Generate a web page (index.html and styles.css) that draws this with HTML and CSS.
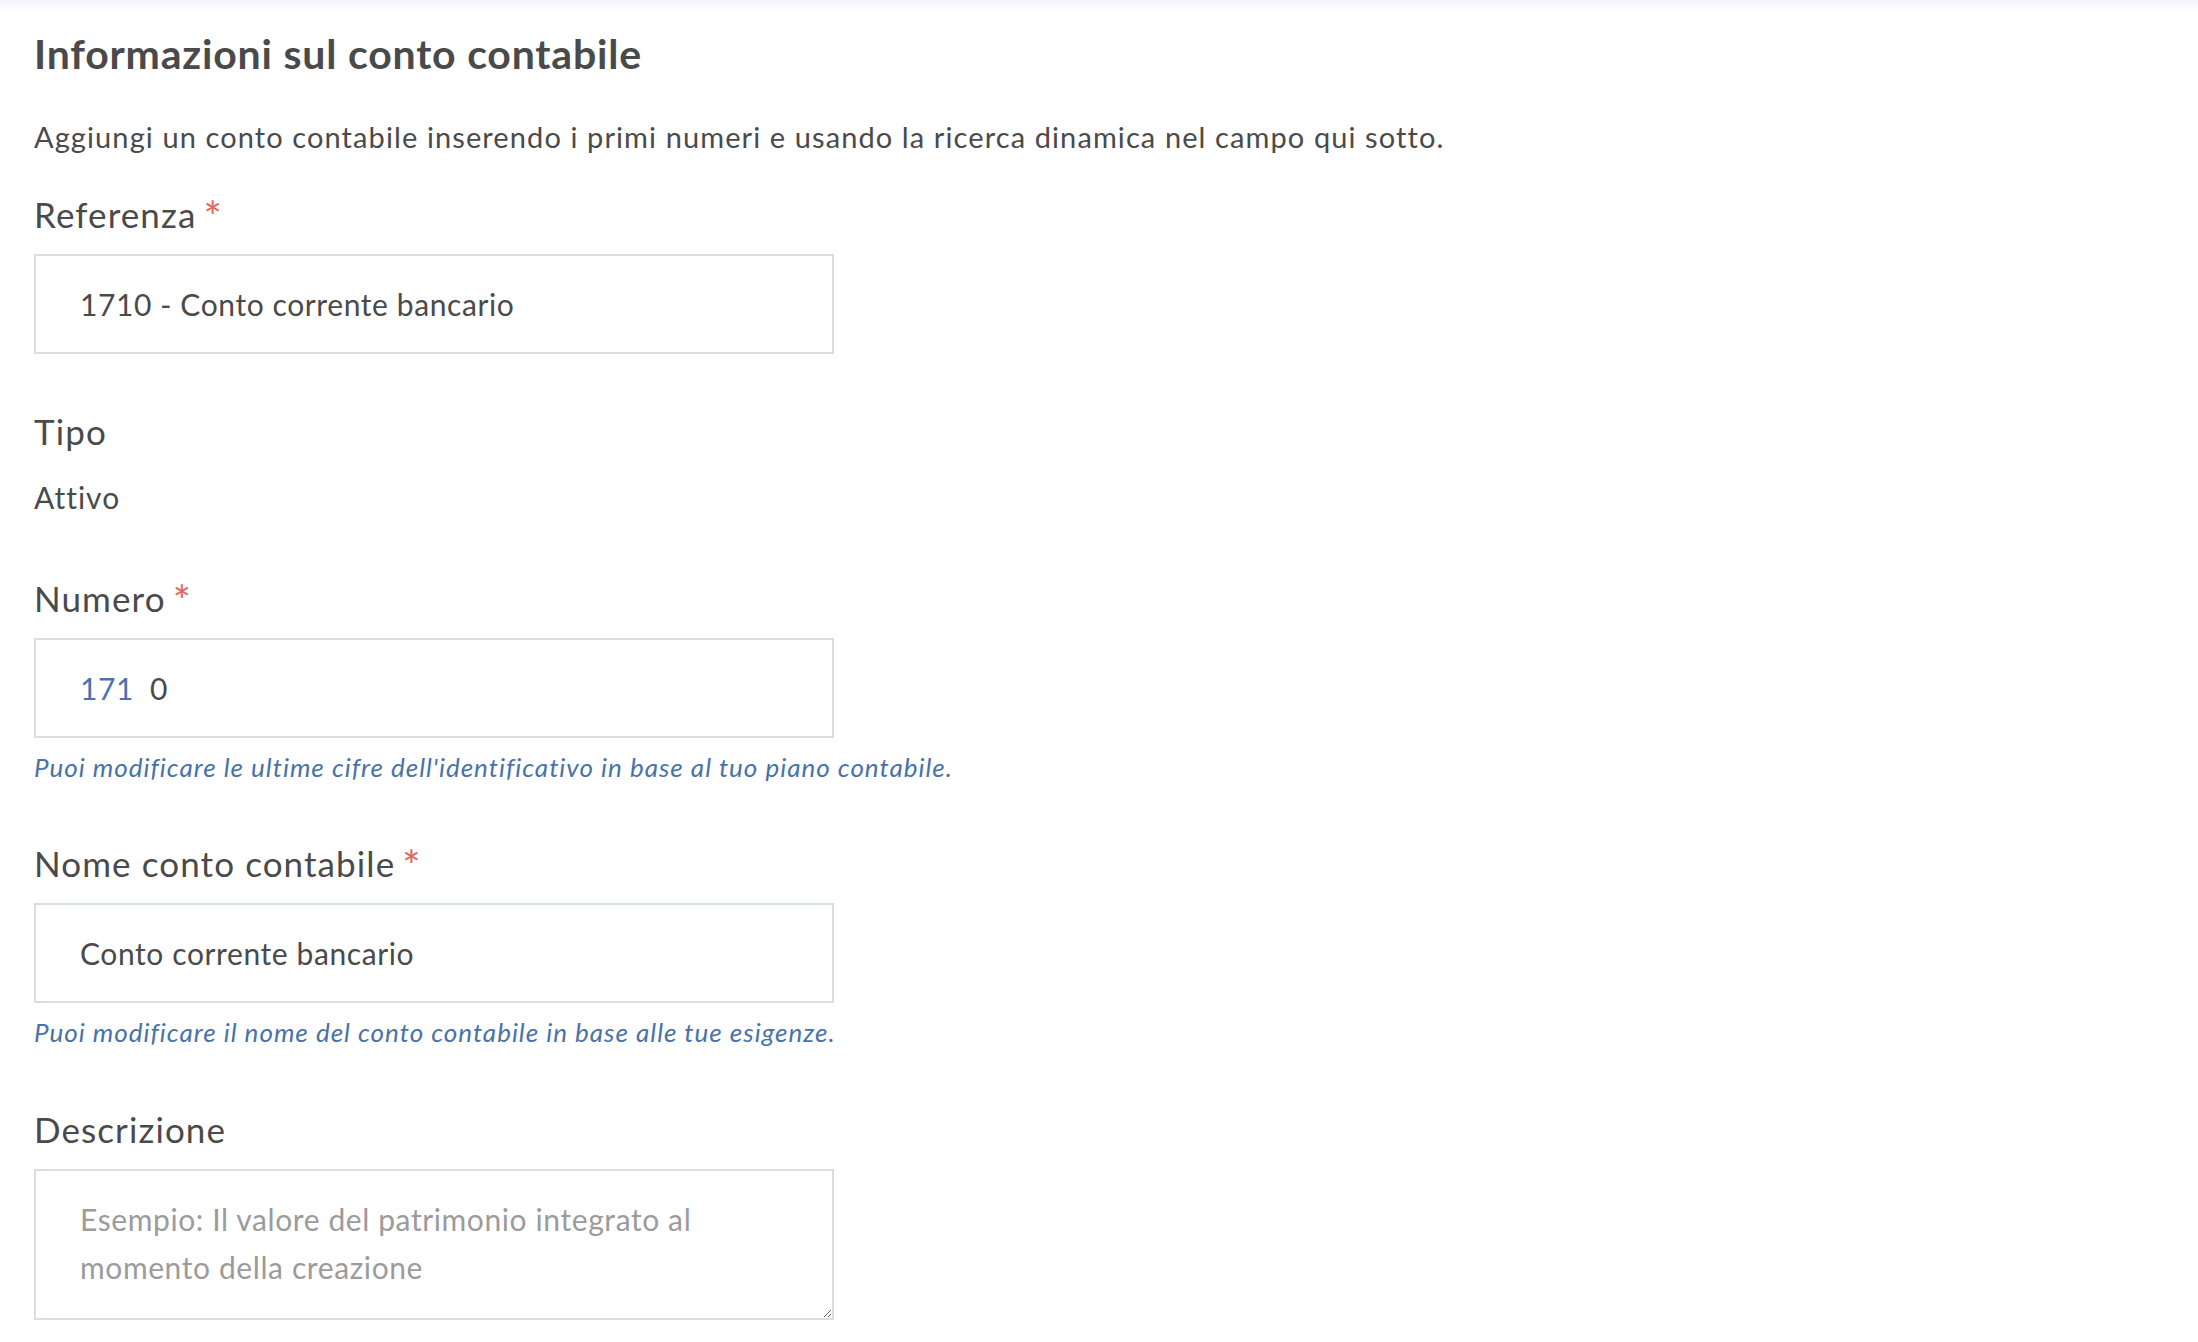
FILE: index.html
```html
<!DOCTYPE html>
<html lang="it">
<head>
<meta charset="utf-8">
<title>Informazioni sul conto contabile</title>
<link rel="stylesheet" href="styles.css">
</head>
<body>
<div class="top-shade"></div>
<main class="form">
  <h1 class="title">Informazioni sul conto contabile</h1>
  <p class="intro">Aggiungi un conto contabile inserendo i primi numeri e usando la ricerca dinamica nel campo qui sotto.</p>

  <div class="field field-ref">
    <label class="label">Referenza<span class="req">*</span></label>
    <input class="input" type="text" value="1710 - Conto corrente bancario">
  </div>

  <div class="field field-tipo">
    <div class="label">Tipo</div>
    <div class="value">Attivo</div>
  </div>

  <div class="field field-num">
    <label class="label">Numero<span class="req">*</span></label>
    <div class="input input-prefixed">
      <span class="prefix">171</span>
      <input class="suffix-input" type="text" value="0">
    </div>
    <div class="help">Puoi modificare le ultime cifre dell'identificativo in base al tuo piano contabile.</div>
  </div>

  <div class="field field-name">
    <label class="label">Nome conto contabile<span class="req">*</span></label>
    <input class="input" type="text" value="Conto corrente bancario">
    <div class="help">Puoi modificare il nome del conto contabile in base alle tue esigenze.</div>
  </div>

  <div class="field field-desc">
    <label class="label">Descrizione</label>
    <textarea class="textarea" placeholder="Esempio: Il valore del patrimonio integrato al momento della creazione"></textarea>
  </div>
</main>
</body>
</html>
```

FILE: styles.css
```css
html, body {
  margin: 0;
  padding: 0;
  background: #ffffff;
}

body {
  font-family: Lato, "Noto Sans", sans-serif;
  color: #4a4a4a;
}

.top-shade {
  height: 12px;
  background: linear-gradient(to bottom, #f2f5fb 0%, #ffffff 100%);
}

.form {
  padding: 0 0 0 34px;
}

.title {
  margin: 18px 0 0 0;
  font-size: 41px;
  line-height: 48px;
  font-weight: 700;
  letter-spacing: 0.8px;
  color: #4a4a4a;
}

.intro {
  margin: 39px 0 0 0;
  font-size: 29px;
  line-height: 40px;
  letter-spacing: 1.1px;
  color: #4a4a4a;
}

.field {
  display: flex;
  flex-direction: column;
  align-items: flex-start;
}

.field-ref { margin-top: 37px; }
.field-tipo { margin-top: 57px; }
.field-num { margin-top: 61px; }
.field-name { margin-top: 60px; }
.field-desc { margin-top: 61px; }

.label {
  display: block;
  font-size: 35px;
  line-height: 40px;
  letter-spacing: 1.1px;
  color: #4a4a4a;
  margin-bottom: 20px;
}

.field-tipo .label {
  margin-bottom: 26px;
}

.req {
  color: #e0675f;
  font-size: 43px;
  line-height: 0;
  margin-left: 7px;
  vertical-align: -4px;
}

.value {
  font-size: 30px;
  line-height: 40px;
  letter-spacing: 1px;
  color: #4a4a4a;
}

.input {
  box-sizing: border-box;
  width: 800px;
  height: 100px;
  margin: 0;
  padding: 0 44px;
  border: 2px solid #d8dde6;
  border-radius: 0;
  background: #ffffff;
  font-family: Lato, "Noto Sans", sans-serif;
  font-size: 30px;
  letter-spacing: 0.6px;
  color: #4a4a4a;
  outline: none;
}

.input-prefixed {
  display: flex;
  align-items: center;
  gap: 16px;
}

.prefix {
  color: #4a72ad;
  font-size: 30px;
  letter-spacing: 0.6px;
}

.suffix-input {
  flex: 1;
  border: 0;
  padding: 0;
  margin: 0;
  outline: none;
  background: transparent;
  font-family: Lato, "Noto Sans", sans-serif;
  font-size: 30px;
  letter-spacing: 0.6px;
  color: #4a4a4a;
}

.help {
  margin-top: 13px;
  font-size: 26px;
  line-height: 32px;
  font-style: italic;
  letter-spacing: 1px;
  color: #4872a8;
}

.textarea {
  box-sizing: border-box;
  display: block;
  width: 800px;
  height: 151px;
  margin: 0;
  padding: 24px 44px;
  border: 2px solid #d8dde6;
  border-radius: 0;
  background: #ffffff;
  font-family: Lato, "Noto Sans", sans-serif;
  font-size: 30px;
  line-height: 48px;
  letter-spacing: 0.6px;
  color: #4a4a4a;
  outline: none;
  resize: vertical;
}

.textarea::placeholder {
  color: #9b9b9b;
  opacity: 1;
}
```
